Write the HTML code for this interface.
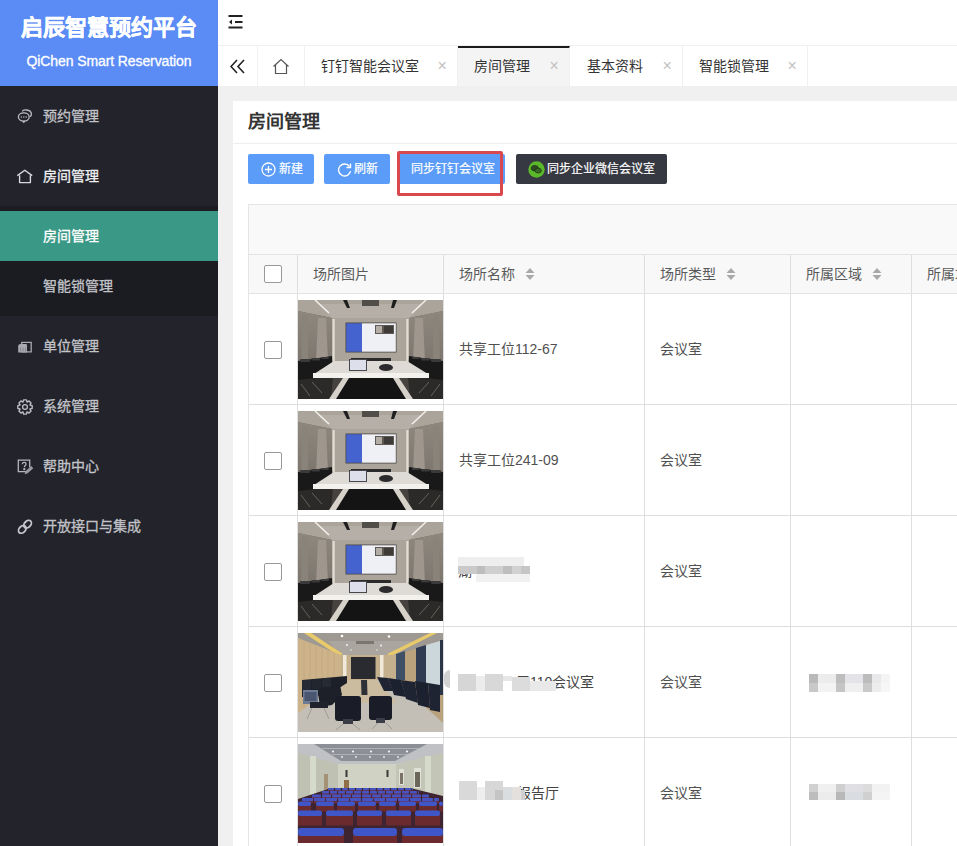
<!DOCTYPE html>
<html lang="zh-CN">
<head>
<meta charset="utf-8">
<style>
*{box-sizing:border-box;margin:0;padding:0}
html,body{width:957px;height:846px;overflow:hidden;background:#f0f0f0;font-family:"Liberation Sans",sans-serif;}
.abs{position:absolute}
#side{position:absolute;left:0;top:0;width:218px;height:846px;background:#22232b}
#logo{position:absolute;left:0;top:0;width:218px;height:86px;background:#5b8cf6;color:#fff;text-align:center}
#logo .t1{position:absolute;left:0;width:218px;top:13px;font-size:22px;font-weight:bold;line-height:30px;letter-spacing:0px;-webkit-text-stroke:0.4px #fff}
#logo .t2{position:absolute;left:0;width:218px;top:52px;font-size:14px;line-height:18px;letter-spacing:-0.1px;-webkit-text-stroke:0.3px #fff}
.mi{position:absolute;left:0;width:218px;color:#c2c3c8;font-size:14px;line-height:20px;-webkit-text-stroke:0.3px currentColor}
.mi span{position:absolute;left:43px;top:1px}
.mi svg{position:absolute;left:17px;top:3px}
#sub{position:absolute;left:0;top:206px;width:218px;height:110px;background:#1b1c22}
#subact{position:absolute;left:0;top:211px;width:218px;height:50px;background:#3a9886}
#top{position:absolute;left:218px;top:0;width:739px;height:86px;background:#fff}
#card{position:absolute;left:233px;top:101px;width:724px;height:745px;background:#fff}
#tabs{position:absolute;left:0;top:45px;width:739px;height:41px;border-top:1px solid #f0f0f0}
.tab{position:absolute;top:0;height:40px;border-right:1px solid #f0f0f0;color:#333;font-size:14px;line-height:20px}
.tab span{position:absolute;top:10px;margin-left:1px}
.tab i{position:absolute;top:10px;font-style:normal;color:#c2c2c2;font-size:16px;margin-left:1.5px}
.tab.act{background:#f4f4f4;border-top:2px solid #1a1a1a;top:0;height:40px}
.tab.act span{top:8px}.tab.act i{top:8px}

#ctitle{position:absolute;left:15px;top:9px;font-size:18px;font-weight:bold;color:#333;line-height:24px}
#cline{position:absolute;left:0;top:42px;width:724px;height:1px;background:#eee}
.btn{position:absolute;top:53px;height:30px;background:#5a9cf8;border-radius:2px;color:#fff;font-size:12px;line-height:16px;-webkit-text-stroke:0.2px #fff}
.btn span{position:absolute;top:7px}
.btn.dark{background:#363842}
#redbox{position:absolute;left:164px;top:50px;width:106px;height:45px;border:3px solid #d9484f;border-radius:2px}
#table{position:absolute;left:15px;top:103px;width:709px;height:642px;border:1px solid #e5e5e5;border-right:none}
#tbar{position:absolute;left:0;top:0;width:709px;height:49px;background:#f9f9f9}
#thead{position:absolute;left:0;top:49px;width:709px;height:40px;background:#f8f8f8;border-top:1px solid #e3e3e3;border-bottom:1px solid #e3e3e3}
.cb{position:absolute;width:18px;height:18px;border:1px solid #999;border-radius:2px;background:#fff}
.vl{position:absolute;top:0;width:1px;height:100%;background:#dedede}
.th{position:absolute;top:9px;white-space:nowrap;font-size:14px;line-height:20px;color:#5a5a5a}
.tr{position:absolute;left:0;width:709px;height:111px;border-bottom:1px solid #dedede;background:#fff}
.td{position:absolute;top:45px;font-size:14px;line-height:20px;color:#505050}
</style>
</head>
<body>
<svg width="0" height="0" style="position:absolute"><symbol id="p1" viewBox="0 0 145 99">
 <defs><linearGradient id="g1w" x1="0" x2="0" y1="0" y2="1"><stop offset="0" stop-color="#8f887f"/><stop offset="1" stop-color="#7a736b"/></linearGradient></defs>
 <rect width="145" height="99" fill="#6d6862"/>
 <polygon points="0,0 145,0 145,11 111,18 34,18 0,11" fill="#aaa49b"/>
 <polygon points="20,4 125,4 111,18 34,18" fill="#b5afa7"/>
 <rect x="34" y="18" width="77" height="46" fill="#aba49b"/>
 <polygon points="0,11 34,18 34,64 0,70" fill="url(#g1w)"/>
 <polygon points="145,11 111,18 111,64 145,70" fill="url(#g1w)"/>
 <polygon points="20,18 28,18 30,60 18,62" fill="#9f978e"/>
 <polygon points="117,18 125,18 127,62 115,60" fill="#9f978e"/>
 <polygon points="4,14 10,15 10,64 3,66" fill="#8a837a"/>
 <polygon points="135,15 141,14 142,66 135,64" fill="#8a837a"/>
 <rect x="34.5" y="19" width="2.2" height="45" fill="#e2dcd2"/>
 <rect x="108.3" y="19" width="2.2" height="45" fill="#e2dcd2"/>
 <line x1="17" y1="0" x2="31" y2="13" stroke="#f4f2ee" stroke-width="1.4"/>
 <line x1="128" y1="0" x2="114" y2="13" stroke="#f4f2ee" stroke-width="1.4"/>
 <polygon points="45,0 49,0 52,8 49,8" fill="#1e1e1e"/>
 <polygon points="95,0 99,0 96,8 93,8" fill="#1e1e1e"/>
 <rect x="64" y="0" width="17" height="6" fill="#514e4a"/>
 <rect x="47.5" y="22.5" width="51" height="30" fill="#4a4744"/>
 <rect x="48.3" y="23.3" width="15.7" height="28.4" fill="#4563cf"/>
 <rect x="64" y="23.3" width="33.8" height="28.4" fill="#eef0f5"/>
 <rect x="77" y="25" width="19" height="9" fill="#5e5954"/>
 <rect x="78" y="26" width="6" height="7" fill="#b3ada5"/><rect x="86" y="26" width="9" height="7" fill="#3d3a37"/>
 <rect x="0" y="64" width="145" height="35" fill="#45423f"/>
 <rect x="53" y="58" width="40" height="5" fill="#2a2a2a"/>
 <polygon points="0,61 34,56 35,78 0,92" fill="#191919"/>
 <polygon points="145,61 111,56 110,78 145,92" fill="#191919"/>
 <g fill="#3a3a3a"><rect x="2" y="59" width="10" height="3" rx="1"/><rect x="13" y="58" width="9" height="2.5" rx="1"/><rect x="23" y="57" width="8" height="2" rx="1"/>
 <rect x="133" y="59" width="10" height="3" rx="1"/><rect x="123" y="58" width="9" height="2.5" rx="1"/><rect x="114" y="57" width="8" height="2" rx="1"/></g>
 <polygon points="0,80 35,76 33,99 0,99" fill="#2b2a28"/>
 <polygon points="145,80 110,76 112,99 145,99" fill="#2b2a28"/>
 <g stroke="#8c8882" stroke-width="0.6"><line x1="3" y1="84" x2="12" y2="96"/><line x1="14" y1="82" x2="24" y2="93"/><line x1="142" y1="84" x2="133" y2="96"/><line x1="131" y1="82" x2="121" y2="93"/></g>
 <polygon points="16,74 130,74 109,61 36,61" fill="#dedbd6"/>
 <rect x="15" y="73" width="116" height="5" fill="#f3f1ed"/>
 <rect x="51" y="59" width="18" height="12" fill="#48484c"/>
 <rect x="52" y="60" width="16" height="10" fill="#dde0ea"/>
 <ellipse cx="88" cy="67.5" rx="7" ry="3.6" fill="#2b2b2d"/>
 <polygon points="50,78 97,78 110,99 35,99" fill="#141414"/>
 <polygon points="45,78 51,78 38,99 31,99" fill="#d6d1c9"/>
 <polygon points="95,78 101,78 115,99 108,99" fill="#d6d1c9"/>
</symbol><symbol id="p2" viewBox="0 0 145 99">
 <rect width="145" height="99" fill="#c3beb5"/>
 <polygon points="0,0 145,0 145,8 98,23 43,23 0,6" fill="#9e9992"/>
 <polygon points="30,8 115,8 98,23 43,23" fill="#aaa59e"/>
 <polygon points="6,0 13,0 45,21 41,23" fill="#e9ca6a"/>
 <polygon points="132,0 139,0 93,23 89,21" fill="#e9ca6a"/>
 <circle cx="44" cy="3" r="1.3" fill="#fff"/><circle cx="91" cy="3.5" r="1.3" fill="#fff"/>
 <circle cx="49" cy="12" r="1" fill="#f4f4f4"/><circle cx="83" cy="12.5" r="1" fill="#f4f4f4"/>
 <circle cx="53" cy="17" r=".8" fill="#eee"/><circle cx="79" cy="17" r=".8" fill="#eee"/>
 <rect x="58" y="8" width="18" height="3" fill="#7a766f"/>
 <polygon points="0,5 43,22 43,48 0,82" fill="#cdb38a"/>
 <g stroke="#bfa47a" stroke-width="0.6"><line x1="6" y1="9" x2="6" y2="77"/><line x1="12" y1="11" x2="12" y2="72"/><line x1="18" y1="13" x2="18" y2="67"/><line x1="24" y1="15" x2="24" y2="63"/><line x1="30" y1="17" x2="30" y2="58"/><line x1="36" y1="19" x2="36" y2="54"/></g>
 <rect x="43" y="22" width="55" height="25" fill="#c5b08d"/>
 <rect x="45" y="22" width="3.5" height="25" fill="#f0e8d8"/>
 <rect x="82" y="22" width="3.5" height="25" fill="#f0e8d8"/>
 <rect x="53" y="24" width="24.5" height="22" fill="#2a2b30"/>
 <polygon points="98,22 145,7 145,90 98,48" fill="#b9a27c"/>
 <polygon points="98,21 107,18 107,47 98,47" fill="#3e4f66"/>
 <polygon points="118,15 128,12 128,54 118,50" fill="#2f3c52"/>
 <polygon points="128,12 142,8 142,57 128,54" fill="#ccd7db"/>
 <rect x="142" y="7" width="3" height="55" fill="#2a3648"/>
 <polygon points="0,80 43,48 98,48 145,90 145,99 0,99" fill="#c4bfb6"/>
 <polygon points="45,47 79,47 99,70 35,70" fill="#ccbc9f"/>
 <polygon points="63,47 69,47 69.5,62 63.5,62" fill="#2e3038"/>
 <polygon points="4,47 49,43 49,50 30,62 4,64" fill="#1d2029"/>
 <rect x="4" y="47" width="9" height="10" rx="1.5" fill="#262a35"/><rect x="14" y="46" width="9" height="10" rx="1.5" fill="#22262f"/><rect x="24" y="45" width="9" height="9" rx="1.5" fill="#262a35"/>
 <polygon points="20,60 42,52 44,62 34,72 22,74" fill="#1d2029"/>
 <rect x="5" y="57" width="15" height="14" fill="#6d7b95"/>
 <rect x="6.5" y="59" width="12" height="9" fill="#4a5670"/>
 <rect x="12" y="69" width="18" height="6" fill="#20232b"/>
 <polygon points="79,44 90,45 95,58 86,58" fill="#1f2433"/>
 <polygon points="90,45 103,47 108,64 96,62" fill="#1c2130"/>
 <polygon points="103,47 117,49 120,70 108,66" fill="#1f2433"/>
 <polygon points="117,48 130,50 132,75 120,72" fill="#1c2130"/>
 <polygon points="130,50 142,52 142,79 132,77" fill="#1f2433"/>
 <rect x="37" y="63" width="26" height="25" rx="3" fill="#1a1d27"/>
 <rect x="71" y="63" width="23" height="24" rx="3" fill="#1a1d27"/>
 <rect x="45" y="86" width="10" height="5" fill="#3a3d45"/><rect x="78" y="85" width="9" height="5" fill="#3a3d45"/>
 <g stroke="#8e8b86" stroke-width="0.7"><line x1="45" y1="91" x2="38" y2="97"/><line x1="55" y1="91" x2="62" y2="97"/><line x1="80" y1="90" x2="74" y2="96"/><line x1="88" y1="90" x2="94" y2="96"/><line x1="14" y1="75" x2="9" y2="86"/><line x1="26" y1="75" x2="31" y2="86"/></g>
</symbol><symbol id="p3" viewBox="0 0 145 99">
 <rect width="145" height="99" fill="#cdd0c0"/>
 <polygon points="0,0 145,0 145,10 98,20 40,20 0,10" fill="#c0c1c4"/>
 <polygon points="16,0 129,0 97,17 43,17" fill="#8d8f97"/>
 <line x1="24" y1="4.5" x2="121" y2="4.5" stroke="#b9bac0" stroke-width="0.8"/>
 <line x1="34" y1="10.5" x2="110" y2="10.5" stroke="#b9bac0" stroke-width="0.8"/>
 <circle cx="35" cy="7.5" r="1.1" fill="#f4f4f4"/><circle cx="55" cy="7.5" r="1.1" fill="#f4f4f4"/><circle cx="73" cy="7.5" r="1.1" fill="#f4f4f4"/><circle cx="91" cy="7.5" r="1.1" fill="#f4f4f4"/><circle cx="109" cy="7.5" r="1.1" fill="#f4f4f4"/>
 <circle cx="44" cy="13" r=".9" fill="#eee"/><circle cx="58" cy="13" r=".9" fill="#eee"/><circle cx="72" cy="13" r=".9" fill="#eee"/><circle cx="86" cy="13" r=".9" fill="#eee"/><circle cx="100" cy="13" r=".9" fill="#eee"/>
 <polygon points="0,9 40,20 40,46 0,58" fill="#bfc2b2"/>
 <polygon points="145,9 98,20 98,46 145,58" fill="#c3c6b6"/>
 <rect x="40" y="20" width="58" height="26" fill="#d0d2c3"/>
 <rect x="12" y="12" width="6" height="42" fill="#d6dacb"/>
 <rect x="127" y="12" width="6" height="42" fill="#d6dacb"/>
 <rect x="26" y="30" width="4" height="22" fill="#a39276"/>
 <rect x="46" y="36" width="5" height="8" fill="#8f6e48"/>
 <rect x="47.5" y="26" width="2" height="7" fill="#3a3a3a"/>
 <rect x="88.5" y="26" width="2" height="7" fill="#3a3a3a"/>
 <rect x="101" y="25" width="5" height="16" fill="#e0e2d8"/><rect x="102" y="29" width="3" height="11" fill="#7a7466"/>
 <rect x="116" y="24" width="7" height="20" fill="#e0e2d8"/><rect x="117" y="28" width="5" height="15" fill="#6b665a"/>
 <polygon points="33,44 112,44 145,52 145,99 0,99 0,55" fill="#3e2430"/>
 <rect x="30.0" y="45.7" width="6.0" height="2.1" fill="#6a2f3c"/><rect x="30.0" y="44.0" width="6.0" height="2.2" rx="0.8" fill="#4653c2"/><rect x="37.0" y="45.7" width="6.0" height="2.1" fill="#6a2f3c"/><rect x="37.0" y="44.0" width="6.0" height="2.2" rx="0.8" fill="#4653c2"/><rect x="44.0" y="45.7" width="6.0" height="2.1" fill="#6a2f3c"/><rect x="44.0" y="44.0" width="6.0" height="2.2" rx="0.8" fill="#4653c2"/><rect x="51.0" y="45.7" width="6.0" height="2.1" fill="#6a2f3c"/><rect x="51.0" y="44.0" width="6.0" height="2.2" rx="0.8" fill="#4653c2"/><rect x="58.0" y="45.7" width="6.0" height="2.1" fill="#6a2f3c"/><rect x="58.0" y="44.0" width="6.0" height="2.2" rx="0.8" fill="#4653c2"/><rect x="65.0" y="45.7" width="6.0" height="2.1" fill="#6a2f3c"/><rect x="65.0" y="44.0" width="6.0" height="2.2" rx="0.8" fill="#4653c2"/><rect x="72.0" y="45.7" width="6.0" height="2.1" fill="#6a2f3c"/><rect x="72.0" y="44.0" width="6.0" height="2.2" rx="0.8" fill="#4653c2"/><rect x="79.0" y="45.7" width="6.0" height="2.1" fill="#6a2f3c"/><rect x="79.0" y="44.0" width="6.0" height="2.2" rx="0.8" fill="#4653c2"/><rect x="86.0" y="45.7" width="6.0" height="2.1" fill="#6a2f3c"/><rect x="86.0" y="44.0" width="6.0" height="2.2" rx="0.8" fill="#4653c2"/><rect x="93.0" y="45.7" width="6.0" height="2.1" fill="#6a2f3c"/><rect x="93.0" y="44.0" width="6.0" height="2.2" rx="0.8" fill="#4653c2"/><rect x="100.0" y="45.7" width="6.0" height="2.1" fill="#6a2f3c"/><rect x="100.0" y="44.0" width="6.0" height="2.2" rx="0.8" fill="#4653c2"/><rect x="107.0" y="45.7" width="6.0" height="2.1" fill="#6a2f3c"/><rect x="107.0" y="44.0" width="6.0" height="2.2" rx="0.8" fill="#4653c2"/><rect x="114.0" y="45.7" width="1.0" height="2.1" fill="#6a2f3c"/><rect x="114.0" y="44.0" width="1.0" height="2.2" rx="0.8" fill="#4653c2"/><rect x="24.0" y="49.0" width="7.0" height="2.3" fill="#6a2f3c"/><rect x="24.0" y="47.0" width="7.0" height="2.5" rx="0.8" fill="#4653c2"/><rect x="32.0" y="49.0" width="7.0" height="2.3" fill="#6a2f3c"/><rect x="32.0" y="47.0" width="7.0" height="2.5" rx="0.8" fill="#4653c2"/><rect x="40.0" y="49.0" width="7.0" height="2.3" fill="#6a2f3c"/><rect x="40.0" y="47.0" width="7.0" height="2.5" rx="0.8" fill="#4653c2"/><rect x="48.0" y="49.0" width="7.0" height="2.3" fill="#6a2f3c"/><rect x="48.0" y="47.0" width="7.0" height="2.5" rx="0.8" fill="#4653c2"/><rect x="56.0" y="49.0" width="7.0" height="2.3" fill="#6a2f3c"/><rect x="56.0" y="47.0" width="7.0" height="2.5" rx="0.8" fill="#4653c2"/><rect x="64.0" y="49.0" width="7.0" height="2.3" fill="#6a2f3c"/><rect x="64.0" y="47.0" width="7.0" height="2.5" rx="0.8" fill="#4653c2"/><rect x="72.0" y="49.0" width="7.0" height="2.3" fill="#6a2f3c"/><rect x="72.0" y="47.0" width="7.0" height="2.5" rx="0.8" fill="#4653c2"/><rect x="80.0" y="49.0" width="7.0" height="2.3" fill="#6a2f3c"/><rect x="80.0" y="47.0" width="7.0" height="2.5" rx="0.8" fill="#4653c2"/><rect x="88.0" y="49.0" width="7.0" height="2.3" fill="#6a2f3c"/><rect x="88.0" y="47.0" width="7.0" height="2.5" rx="0.8" fill="#4653c2"/><rect x="96.0" y="49.0" width="7.0" height="2.3" fill="#6a2f3c"/><rect x="96.0" y="47.0" width="7.0" height="2.5" rx="0.8" fill="#4653c2"/><rect x="104.0" y="49.0" width="7.0" height="2.3" fill="#6a2f3c"/><rect x="104.0" y="47.0" width="7.0" height="2.5" rx="0.8" fill="#4653c2"/><rect x="112.0" y="49.0" width="7.0" height="2.3" fill="#6a2f3c"/><rect x="112.0" y="47.0" width="7.0" height="2.5" rx="0.8" fill="#4653c2"/><rect x="120.0" y="49.0" width="1.0" height="2.3" fill="#6a2f3c"/><rect x="120.0" y="47.0" width="1.0" height="2.5" rx="0.8" fill="#4653c2"/><rect x="14.0" y="52.8" width="9.0" height="2.5" fill="#6a2f3c"/><rect x="14.0" y="50.5" width="9.0" height="2.8" rx="0.8" fill="#4653c2"/><rect x="24.0" y="52.8" width="9.0" height="2.5" fill="#6a2f3c"/><rect x="24.0" y="50.5" width="9.0" height="2.8" rx="0.8" fill="#4653c2"/><rect x="34.0" y="52.8" width="9.0" height="2.5" fill="#6a2f3c"/><rect x="34.0" y="50.5" width="9.0" height="2.8" rx="0.8" fill="#4653c2"/><rect x="44.0" y="52.8" width="9.0" height="2.5" fill="#6a2f3c"/><rect x="44.0" y="50.5" width="9.0" height="2.8" rx="0.8" fill="#4653c2"/><rect x="54.0" y="52.8" width="9.0" height="2.5" fill="#6a2f3c"/><rect x="54.0" y="50.5" width="9.0" height="2.8" rx="0.8" fill="#4653c2"/><rect x="64.0" y="52.8" width="9.0" height="2.5" fill="#6a2f3c"/><rect x="64.0" y="50.5" width="9.0" height="2.8" rx="0.8" fill="#4653c2"/><rect x="74.0" y="52.8" width="9.0" height="2.5" fill="#6a2f3c"/><rect x="74.0" y="50.5" width="9.0" height="2.8" rx="0.8" fill="#4653c2"/><rect x="84.0" y="52.8" width="9.0" height="2.5" fill="#6a2f3c"/><rect x="84.0" y="50.5" width="9.0" height="2.8" rx="0.8" fill="#4653c2"/><rect x="94.0" y="52.8" width="9.0" height="2.5" fill="#6a2f3c"/><rect x="94.0" y="50.5" width="9.0" height="2.8" rx="0.8" fill="#4653c2"/><rect x="104.0" y="52.8" width="9.0" height="2.5" fill="#6a2f3c"/><rect x="104.0" y="50.5" width="9.0" height="2.8" rx="0.8" fill="#4653c2"/><rect x="114.0" y="52.8" width="9.0" height="2.5" fill="#6a2f3c"/><rect x="114.0" y="50.5" width="9.0" height="2.8" rx="0.8" fill="#4653c2"/><rect x="124.0" y="52.8" width="7.0" height="2.5" fill="#6a2f3c"/><rect x="124.0" y="50.5" width="7.0" height="2.8" rx="0.8" fill="#4653c2"/><rect x="4.0" y="56.5" width="11.0" height="2.7" fill="#6a2f3c"/><rect x="4.0" y="54.0" width="11.0" height="3.0" rx="0.8" fill="#4653c2"/><rect x="16.0" y="56.5" width="11.0" height="2.7" fill="#6a2f3c"/><rect x="16.0" y="54.0" width="11.0" height="3.0" rx="0.8" fill="#4653c2"/><rect x="28.0" y="56.5" width="11.0" height="2.7" fill="#6a2f3c"/><rect x="28.0" y="54.0" width="11.0" height="3.0" rx="0.8" fill="#4653c2"/><rect x="40.0" y="56.5" width="11.0" height="2.7" fill="#6a2f3c"/><rect x="40.0" y="54.0" width="11.0" height="3.0" rx="0.8" fill="#4653c2"/><rect x="52.0" y="56.5" width="11.0" height="2.7" fill="#6a2f3c"/><rect x="52.0" y="54.0" width="11.0" height="3.0" rx="0.8" fill="#4653c2"/><rect x="64.0" y="56.5" width="11.0" height="2.7" fill="#6a2f3c"/><rect x="64.0" y="54.0" width="11.0" height="3.0" rx="0.8" fill="#4653c2"/><rect x="76.0" y="56.5" width="11.0" height="2.7" fill="#6a2f3c"/><rect x="76.0" y="54.0" width="11.0" height="3.0" rx="0.8" fill="#4653c2"/><rect x="88.0" y="56.5" width="11.0" height="2.7" fill="#6a2f3c"/><rect x="88.0" y="54.0" width="11.0" height="3.0" rx="0.8" fill="#4653c2"/><rect x="100.0" y="56.5" width="11.0" height="2.7" fill="#6a2f3c"/><rect x="100.0" y="54.0" width="11.0" height="3.0" rx="0.8" fill="#4653c2"/><rect x="112.0" y="56.5" width="11.0" height="2.7" fill="#6a2f3c"/><rect x="112.0" y="54.0" width="11.0" height="3.0" rx="0.8" fill="#4653c2"/><rect x="124.0" y="56.5" width="11.0" height="2.7" fill="#6a2f3c"/><rect x="124.0" y="54.0" width="11.0" height="3.0" rx="0.8" fill="#4653c2"/><rect x="136.0" y="56.5" width="5.0" height="2.7" fill="#6a2f3c"/><rect x="136.0" y="54.0" width="5.0" height="3.0" rx="0.8" fill="#4653c2"/>
 <rect x="0" y="61.0" width="13" height="6.5" fill="#6b2a2e"/><rect x="0" y="57.5" width="13" height="4.5" rx="2" fill="#3f56c8"/><rect x="18" y="61.0" width="18" height="6.5" fill="#6b2a2e"/><rect x="18" y="57.5" width="18" height="4.5" rx="2" fill="#3f56c8"/><rect x="39" y="61.0" width="18" height="6.5" fill="#6b2a2e"/><rect x="39" y="57.5" width="18" height="4.5" rx="2" fill="#3f56c8"/><rect x="60" y="61.0" width="18" height="6.5" fill="#6b2a2e"/><rect x="60" y="57.5" width="18" height="4.5" rx="2" fill="#3f56c8"/><rect x="81" y="61.0" width="17" height="6.5" fill="#6b2a2e"/><rect x="81" y="57.5" width="17" height="4.5" rx="2" fill="#3f56c8"/><rect x="101" y="61.0" width="17" height="6.5" fill="#6b2a2e"/><rect x="101" y="57.5" width="17" height="4.5" rx="2" fill="#3f56c8"/><rect x="121" y="61.0" width="18" height="6.5" fill="#6b2a2e"/><rect x="121" y="57.5" width="18" height="4.5" rx="2" fill="#3f56c8"/><rect x="141" y="61.0" width="4" height="6.5" fill="#6b2a2e"/><rect x="141" y="57.5" width="4" height="4.5" rx="2" fill="#3f56c8"/>
 <rect x="0" y="71.0" width="24" height="10.5" fill="#6b2a2e"/><rect x="0" y="66.5" width="24" height="5.5" rx="2" fill="#3f56c8"/><rect x="28" y="71.0" width="27" height="10.5" fill="#6b2a2e"/><rect x="28" y="66.5" width="27" height="5.5" rx="2" fill="#3f56c8"/><rect x="59" y="71.0" width="25" height="10.5" fill="#6b2a2e"/><rect x="59" y="66.5" width="25" height="5.5" rx="2" fill="#3f56c8"/><rect x="88" y="71.0" width="25" height="10.5" fill="#6b2a2e"/><rect x="88" y="66.5" width="25" height="5.5" rx="2" fill="#3f56c8"/><rect x="117" y="71.0" width="25" height="10.5" fill="#6b2a2e"/><rect x="117" y="66.5" width="25" height="5.5" rx="2" fill="#3f56c8"/>
 <rect x="0" y="91" width="46" height="8.5" fill="#6b2a2e"/><rect x="0" y="84" width="46" height="8" rx="3" fill="#3f56c8"/><rect x="55" y="91" width="44" height="8.5" fill="#6b2a2e"/><rect x="55" y="84" width="44" height="8" rx="3" fill="#3f56c8"/><rect x="104" y="91" width="41" height="8.5" fill="#6b2a2e"/><rect x="104" y="84" width="41" height="8" rx="3" fill="#3f56c8"/>
</symbol></svg>
<div id="side">
  <div id="logo"><div class="t1">启辰智慧预约平台</div><div class="t2">QiChen Smart Reservation</div></div>
  <div id="sub"></div>
  <div id="subact"></div>

  <svg class="abs" style="left:16px;top:108px" width="18" height="18" viewBox="0 0 18 18" fill="none" stroke="#bbbcc2" stroke-width="1.3"><path d="M6.2 3.2C7.2 2.3 8.8 1.8 10.6 2 13.3 2.3 15.4 4 15.4 6.2c0 1-.5 1.9-1.3 2.6"/><ellipse cx="7.8" cy="9" rx="5.4" ry="4.1"/><path d="M6.8 13L7.8 14.2 8.8 13"/><circle cx="5.4" cy="9" r=".75" fill="#bbbcc2" stroke="none"/><circle cx="7.8" cy="9" r=".75" fill="#bbbcc2" stroke="none"/><circle cx="10.2" cy="9" r=".75" fill="#bbbcc2" stroke="none"/></svg>
  <svg class="abs" style="left:16px;top:168px" width="18" height="16" viewBox="0 0 18 16" fill="none" stroke="#d8d9de" stroke-width="1.4" stroke-linejoin="round"><path d="M1.3 7.6L8.8 2.2 16.2 7.6"/><path d="M3.6 7.2v7.4h10.8V7.2"/></svg>
  <svg class="abs" style="left:17px;top:341px" width="16" height="12" viewBox="0 0 16 12"><path d="M4.8 1.3h9.4v9.6H4.8z" fill="none" stroke="#a9aab0" stroke-width="1.3"/><path d="M1.2 5.2c0-1.3 1-2.2 2.4-2.2h5c.9 0 1.4.5 1.4 1.4v7H1.2z" fill="#a9aab0"/><path d="M3.5 6.5v4M6 6.5v4M8.5 6.5v4" stroke="#7d7e84" stroke-width="0.8"/></svg>
  <svg class="abs" style="left:17px;top:399px" width="16" height="16" viewBox="0 0 16 16"><path d="M13.00 5.97 L15.17 6.61 L15.17 9.39 L13.00 10.03 L12.97 10.10 L14.05 12.08 L12.08 14.05 L10.10 12.97 L10.03 13.00 L9.39 15.17 L6.61 15.17 L5.97 13.00 L5.90 12.97 L3.92 14.05 L1.95 12.08 L3.03 10.10 L3.00 10.03 L0.83 9.39 L0.83 6.61 L3.00 5.97 L3.03 5.90 L1.95 3.92 L3.92 1.95 L5.90 3.03 L5.97 3.00 L6.61 0.83 L9.39 0.83 L10.03 3.00 L10.10 3.03 L12.08 1.95 L14.05 3.92 L12.97 5.90Z" fill="none" stroke="#bdbec4" stroke-width="1.4" stroke-linejoin="round"/><circle cx="8" cy="8" r="2.4" fill="none" stroke="#bdbec4" stroke-width="1.3"/></svg>
  <svg class="abs" style="left:16px;top:458px" width="18" height="18" viewBox="0 0 18 18" fill="none" stroke="#b6b7bd" stroke-width="1.3"><path d="M11 13.6H2.3V2.2h11.4v7.4"/><path d="M6.3 6.3c0-1.2.8-1.9 1.9-1.9s1.9.8 1.9 1.7c0 1.4-1.8 1.5-1.8 3.2" stroke-width="1.2"/><circle cx="8.3" cy="11.2" r=".5" fill="#b6b7bd"/><path d="M8.5 16.3l1.2-3.2 5.6-5 2 2.1-5.6 5z" fill="#9a9ba1" stroke="none"/></svg>
  <svg class="abs" style="left:16px;top:518px" width="18" height="18" viewBox="0 0 18 18" fill="none" stroke="#c6c7cc" stroke-width="1.8"><ellipse cx="6.3" cy="11.4" rx="4.4" ry="3.1" transform="rotate(-45 6.3 11.4)"/><ellipse cx="11.6" cy="6.2" rx="4.4" ry="3.1" transform="rotate(-45 11.6 6.2)"/></svg>
  <div class="mi" style="top:105px"><span>预约管理</span></div>
  <div class="mi" style="top:165px;color:#f0f0f2"><span>房间管理</span></div>
  <div class="mi" style="top:225px;color:#fff"><span>房间管理</span></div>
  <div class="mi" style="top:275px"><span>智能锁管理</span></div>
  <div class="mi" style="top:335px"><span>单位管理</span></div>
  <div class="mi" style="top:395px"><span>系统管理</span></div>
  <div class="mi" style="top:455px"><span>帮助中心</span></div>
  <div class="mi" style="top:515px"><span>开放接口与集成</span></div>
</div>
<div id="top">
  <svg class="abs" style="left:10px;top:14px" width="16" height="16" viewBox="0 0 16 16"><path d="M0.5 2h14M7 8h7.5M0.5 13.5h14" stroke="#222" stroke-width="2"/><path d="M1 8l3-2.5v5z" fill="#222"/></svg>
  <div id="tabs">
    <div class="tab" style="left:0;width:40px"><svg class="abs" style="left:12px;top:12.5px" width="16" height="15" viewBox="0 0 16 15"><path d="M7 1L1 7.5 7 14M14 1L8 7.5 14 14" stroke="#222" stroke-width="1.6" fill="none"/></svg></div>
    <div class="tab" style="left:40px;width:47px"><svg class="abs" style="left:14px;top:12px" width="18" height="17" viewBox="0 0 18 17"><path d="M1.5 8.5L9 1.5 16.5 8.5M3.5 7v8.5h11V7" stroke="#555" stroke-width="1.2" fill="none"/></svg></div>
    <div class="tab" style="left:87px;width:153px"><span style="left:15px">钉钉智能会议室</span><i style="left:131px">×</i></div>
    <div class="tab act" style="left:240px;width:112px"><span style="left:15px">房间管理</span><i style="left:90px">×</i></div>
    <div class="tab" style="left:352px;width:113px"><span style="left:16px">基本资料</span><i style="left:91px">×</i></div>
    <div class="tab" style="left:465px;width:125px"><span style="left:15px">智能锁管理</span><i style="left:103px">×</i></div>
  </div>
</div>
<div id="card">
  <div id="ctitle">房间管理</div>
  <div id="cline"></div>
  <div class="btn" style="left:15px;width:66px"><svg class="abs" style="left:13px;top:8px" width="15" height="15" viewBox="0 0 15 15"><circle cx="7.5" cy="7.5" r="6.5" stroke="#fff" stroke-width="1.3" fill="none"/><path d="M7.5 4v7M4 7.5h7" stroke="#fff" stroke-width="1.3"/></svg><span style="left:31px">新建</span></div>
  <div class="btn" style="left:91px;width:66px"><svg class="abs" style="left:13px;top:8px" width="15" height="15" viewBox="0 0 15 15"><path d="M12.5 4.5A6 6 0 1 0 13.5 9" stroke="#fff" stroke-width="1.4" fill="none"/><path d="M13.5 1.5v4h-4" stroke="#fff" stroke-width="1.4" fill="none"/></svg><span style="left:30px">刷新</span></div>
  <div class="btn" style="left:165px;width:107px"><span style="left:13px">同步钉钉会议室</span></div>
  <div id="redbox"></div>
  <div class="btn dark" style="left:283px;width:151px"><svg class="abs" style="left:12px;top:7px" width="17" height="17" viewBox="0 0 17 17"><circle cx="8.5" cy="8.5" r="8.2" fill="#5cb82b"/><ellipse cx="6.8" cy="7.2" rx="3.6" ry="2.8" fill="#2d4a22" stroke="#1f3a18" stroke-width="0.8"/><ellipse cx="10.2" cy="9.6" rx="3.2" ry="2.5" fill="#3a6a22" stroke="#1f3a18" stroke-width="0.8"/></svg><span style="left:31px">同步企业微信会议室</span></div>
  <div id="table">
    <div id="tbar"></div>
    <div id="thead">
 <div class="cb" style="left:15px;top:10px"></div>
 <div class="vl" style="left:48px"></div><div class="vl" style="left:194px"></div><div class="vl" style="left:395px"></div><div class="vl" style="left:541px"></div><div class="vl" style="left:662px"></div>
 <span class="th" style="left:64px">场所图片</span>
 <span class="th" style="left:210px">场所名称</span><svg class="abs" style="left:276px;top:12px" width="10" height="14" viewBox="0 0 10 14"><path d="M5 1L9.5 6H0.5zM5 13L0.5 8h9z" fill="#a9a9a9"/></svg>
 <span class="th" style="left:411px">场所类型</span><svg class="abs" style="left:477px;top:12px" width="10" height="14" viewBox="0 0 10 14"><path d="M5 1L9.5 6H0.5zM5 13L0.5 8h9z" fill="#a9a9a9"/></svg>
 <span class="th" style="left:557px">所属区域</span><svg class="abs" style="left:623px;top:12px" width="10" height="14" viewBox="0 0 10 14"><path d="M5 1L9.5 6H0.5zM5 13L0.5 8h9z" fill="#a9a9a9"/></svg>
 <span class="th" style="left:678px">所属场</span>
</div>
<div class="tr" style="top:89px">
 <div class="cb" style="left:15px;top:47px"></div>
 <div class="vl" style="left:48px"></div><div class="vl" style="left:194px"></div><div class="vl" style="left:395px"></div><div class="vl" style="left:541px"></div><div class="vl" style="left:662px"></div>
 <svg class="abs" style="left:49px;top:6px" width="145" height="99"><use href="#p1"/></svg>
 <span class="td" style="left:210px">共享工位112-67</span>
 <span class="td" style="left:411px">会议室</span>
</div>
<div class="tr" style="top:200px">
 <div class="cb" style="left:15px;top:47px"></div>
 <div class="vl" style="left:48px"></div><div class="vl" style="left:194px"></div><div class="vl" style="left:395px"></div><div class="vl" style="left:541px"></div><div class="vl" style="left:662px"></div>
 <svg class="abs" style="left:49px;top:6px" width="145" height="99"><use href="#p1"/></svg>
 <span class="td" style="left:210px">共享工位241-09</span>
 <span class="td" style="left:411px">会议室</span>
</div>
<div class="tr" style="top:311px">
 <div class="cb" style="left:15px;top:47px"></div>
 <div class="vl" style="left:48px"></div><div class="vl" style="left:194px"></div><div class="vl" style="left:395px"></div><div class="vl" style="left:541px"></div><div class="vl" style="left:662px"></div>
 <svg class="abs" style="left:49px;top:6px" width="145" height="99"><use href="#p1"/></svg>
 <span class="td" style="left:210px"></span>
 <span class="td" style="left:411px">会议室</span>
</div>
<div class="tr" style="top:422px">
 <div class="cb" style="left:15px;top:47px"></div>
 <div class="vl" style="left:48px"></div><div class="vl" style="left:194px"></div><div class="vl" style="left:395px"></div><div class="vl" style="left:541px"></div><div class="vl" style="left:662px"></div>
 <svg class="abs" style="left:49px;top:6px" width="145" height="99"><use href="#p2"/></svg>
 <span class="td" style="left:210px"></span>
 <span class="td" style="left:411px">会议室</span>
</div>
<div class="tr" style="top:533px">
 <div class="cb" style="left:15px;top:47px"></div>
 <div class="vl" style="left:48px"></div><div class="vl" style="left:194px"></div><div class="vl" style="left:395px"></div><div class="vl" style="left:541px"></div><div class="vl" style="left:662px"></div>
 <svg class="abs" style="left:49px;top:6px" width="145" height="99"><use href="#p3"/></svg>
 <span class="td" style="left:210px"></span>
 <span class="td" style="left:411px">会议室</span>
</div>

  </div>
</div>
<div style="position:absolute;left:0;top:0;width:957px;height:846px;pointer-events:none">
<span style="position:absolute;left:516px;top:672px;font-size:14px;line-height:20px;color:#444;white-space:nowrap">层110会议室</span>
<span style="position:absolute;left:517px;top:783px;font-size:14px;line-height:20px;color:#444;white-space:nowrap">报告厅</span>
<span style="position:absolute;left:458px;top:561px;font-size:14px;line-height:20px;color:#444;white-space:nowrap">湖</span>
<div style="position:absolute;left:0;top:0;filter:blur(0.7px)"><div style="position:absolute;left:458px;top:557px;width:66px;height:9px;background:#eeeeee"></div><div style="position:absolute;left:476px;top:574px;width:54px;height:8px;background:#f1f1f1"></div><div style="position:absolute;left:458px;top:566px;width:19px;height:8px;background:#c9c9c9"></div><div style="position:absolute;left:477px;top:566px;width:8px;height:8px;background:#bdbdbd"></div><div style="position:absolute;left:485px;top:566px;width:18px;height:8px;background:#cfcfcf"></div><div style="position:absolute;left:503px;top:566px;width:9px;height:8px;background:#bebebe"></div><div style="position:absolute;left:512px;top:566px;width:9px;height:8px;background:#d1d1d1"></div><div style="position:absolute;left:521px;top:566px;width:9px;height:8px;background:#c6c6c6"></div><div style="position:absolute;left:458px;top:674px;width:18px;height:17px;background:#d6d6d6"></div><div style="position:absolute;left:476px;top:676px;width:9px;height:15px;background:#ececec"></div><div style="position:absolute;left:485px;top:674px;width:18px;height:17px;background:#d8d8d8"></div><div style="position:absolute;left:503px;top:676px;width:9px;height:5px;background:#e6e6e6"></div><div style="position:absolute;left:512px;top:677px;width:18px;height:14px;background:#dcdcdc"></div><div style="position:absolute;left:530px;top:681px;width:26px;height:10px;background:#e9e9e9"></div><div style="position:absolute;left:459px;top:781px;width:18px;height:19px;background:#d9d9d9"></div><div style="position:absolute;left:477px;top:787px;width:8px;height:13px;background:#eeeeee"></div><div style="position:absolute;left:485px;top:781px;width:18px;height:19px;background:#d7d7d7"></div><div style="position:absolute;left:495px;top:790px;width:8px;height:10px;background:#c4c4c4"></div><div style="position:absolute;left:503px;top:787px;width:9px;height:13px;background:#d9dde0"></div><div style="position:absolute;left:512px;top:787px;width:9px;height:13px;background:#e4e0de"></div><div style="position:absolute;left:521px;top:790px;width:4px;height:10px;background:#d0d0d0"></div><div style="position:absolute;left:809px;top:674px;width:9px;height:9px;background:#b9b9b9"></div><div style="position:absolute;left:809px;top:683px;width:9px;height:9px;background:#c8c8c8"></div><div style="position:absolute;left:818px;top:674px;width:18px;height:9px;background:#ececec"></div><div style="position:absolute;left:818px;top:683px;width:18px;height:9px;background:#f3f3f3"></div><div style="position:absolute;left:836px;top:674px;width:9px;height:9px;background:#bdbdbd"></div><div style="position:absolute;left:836px;top:683px;width:9px;height:9px;background:#c5c5c5"></div><div style="position:absolute;left:845px;top:674px;width:18px;height:9px;background:#e4e4e8"></div><div style="position:absolute;left:845px;top:683px;width:18px;height:9px;background:#efefef"></div><div style="position:absolute;left:863px;top:674px;width:9px;height:9px;background:#bcbcbc"></div><div style="position:absolute;left:863px;top:683px;width:9px;height:9px;background:#c9c9c9"></div><div style="position:absolute;left:872px;top:674px;width:9px;height:9px;background:#e9e9ec"></div><div style="position:absolute;left:872px;top:683px;width:9px;height:9px;background:#ededed"></div><div style="position:absolute;left:881px;top:674px;width:9px;height:9px;background:#f4f4f4"></div><div style="position:absolute;left:881px;top:683px;width:9px;height:9px;background:#f6f6f6"></div><div style="position:absolute;left:809px;top:784px;width:9px;height:8px;background:#d0d0d0"></div><div style="position:absolute;left:809px;top:792px;width:9px;height:8px;background:#bdbdbd"></div><div style="position:absolute;left:818px;top:784px;width:18px;height:8px;background:#f0f0f0"></div><div style="position:absolute;left:818px;top:792px;width:18px;height:8px;background:#ececec"></div><div style="position:absolute;left:836px;top:784px;width:9px;height:8px;background:#cfcfcf"></div><div style="position:absolute;left:836px;top:792px;width:9px;height:8px;background:#b8b8b8"></div><div style="position:absolute;left:845px;top:784px;width:18px;height:8px;background:#e0e0e4"></div><div style="position:absolute;left:845px;top:792px;width:18px;height:8px;background:#d9dce0"></div><div style="position:absolute;left:863px;top:784px;width:9px;height:8px;background:#dcdcdc"></div><div style="position:absolute;left:863px;top:792px;width:9px;height:8px;background:#d0d0d0"></div><div style="position:absolute;left:872px;top:784px;width:18px;height:8px;background:#f2f2f2"></div><div style="position:absolute;left:872px;top:792px;width:18px;height:8px;background:#f4f4f4"></div></div>
<div style="position:absolute;left:444px;top:670px;width:6px;height:18px;border-radius:9px 0 0 9px;background:#d2d2d2"></div>
</div>
</body>
</html>
